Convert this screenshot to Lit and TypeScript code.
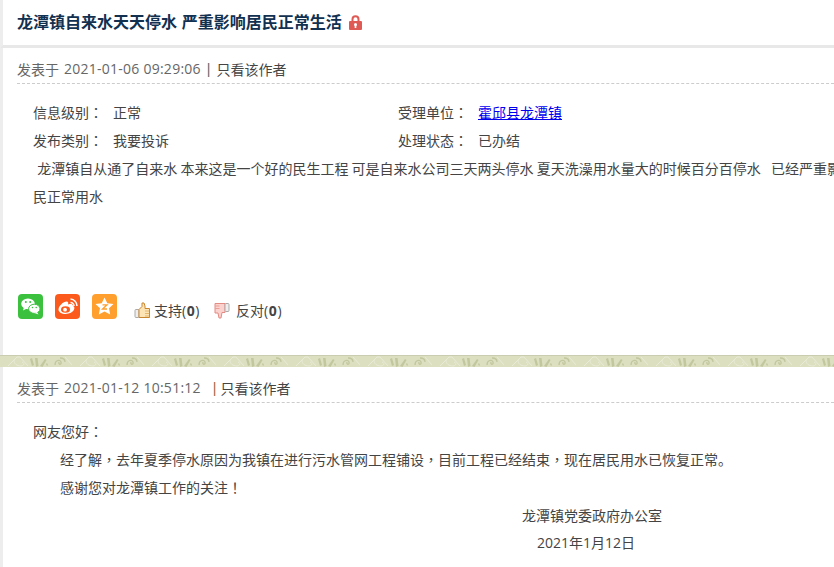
import { LitElement, html, css, svg } from "lit";
import { customElement } from "lit/decorators.js";

const meta = (date: string, sep: string) => html`<div class="meta"><span>发表于</span><span class="date">${date}</span><span class=${sep}>|</span><span class="only">只看该作者</span></div>`;
const p = (s: string) => html`<span class="punct">${s}</span>`;

const bandMotif = svg`
  <path d="M8 10L17 1h3l8 9M14 4c0 4 3 6 7 6 3 0 4-3 1-4" fill="none" stroke="#e9ebd6" stroke-width="1"/>
  <path d="M30 3l2 7 2-1-2-7zM35 2l1 9 2.500-1-1-8zM40 10l5-7 1.500 1-4 7zM46 8l1-1 1 2-1 1z" fill="#c3c79e"/>
  <path d="M55 9c0-5 5-6 6-3s-3 3-2 0M60 2c3 0 5 1 5 4" fill="none" stroke="#c3c79e" stroke-width="1.300"/>
  <path d="M65 1l8 9" fill="none" stroke="#e9ebd6" stroke-width="1"/>`;

@customElement("app-root")
export class AppRoot extends LitElement {
  static styles = css`
    :host { display: block; width: 834px; height: 567px; overflow: hidden; background: #fff; font-family: "Noto Sans CJK SC", "Noto Sans", sans-serif; font-size: 14px; color: #444; }
    .page { width: 888px; height: 567px; display: flex; flex-direction: column; }
    .rail { border-left: 3px solid #ededed; box-sizing: border-box; }
    .head { height: 48px; flex: none; display: flex; align-items: center; padding: 0 0 3px 14px; gap: 7px; border-bottom: 3px solid #e8e8e8; }
    h1 { margin: 0; font-size: 16px; font-weight: 700; color: #12304f; line-height: 22px; word-spacing: 1px; }
    .lock { margin-top: 3px; }
    .post { padding: 0 14px; height: 307px; flex: none; }
    .meta { height: 31px; display: flex; align-items: flex-end; padding-bottom: 4px; border-bottom: 1px dashed #ccc; line-height: 20px; color: #666; }
    .date { font-family: "Open Sans", sans-serif; letter-spacing: 0.25px; margin-left: 5px; }
    .sep1 { margin: 0 6px 0 6px; color: #666; font-family: "Liberation Sans", sans-serif; }
    .sep2 { margin: 0 4px 0 12px; color: #a0633a; font-family: "Liberation Sans", sans-serif; }
    .only { color: #444; }
    .info { display: grid; grid-template-columns: 365px 1fr; padding: 18px 0 0 16px; row-gap: 8px; line-height: 20px; }
    .cell { display: flex; }
    .cell b { font-weight: 400; width: 80px; }
    .punct { font-family: "Noto Sans CJK TC", sans-serif; }
    a { color: #00e; text-decoration: underline; }
    .text { margin: 0 0 0 16px; padding-top: 4px; line-height: 28px; height: 128px; white-space: pre-wrap; text-indent: -2px; }
    .actions { display: flex; align-items: flex-start; margin-top: 12px; padding-left: 1px; }
    .soc { width: 25px; height: 25px; display: block; margin-right: 12px; flex: none; }
    .vote { display: flex; align-items: center; margin: 6px 14px 0 0; gap: 3px; line-height: 20px; color: #444; }
    .vote.first { margin-left: 5px; }
    .vote.down { gap: 5px; }
    .num { font-family: "Open Sans", sans-serif; letter-spacing: 0.6px; }
    .num b { font-weight: 700; }
    .band { display: block; height: 12px; width: 100%; flex: none; }
    .reply { padding: 0 14px; flex: 1; }
    .body { padding: 14px 0 0 16px; line-height: 28px; }
    .ind { padding-left: 27px; }
    .sign { padding-left: 489px; }
    .sign2 { padding-left: 504px; font-family: "Open Sans", "Noto Sans CJK SC", sans-serif; }
  `;
  render() {
    return html`<div class="page">
      <div class="head rail"><h1>龙潭镇自来水天天停水 严重影响居民正常生活</h1>
        <svg class="lock" width="13" height="15" viewBox="0 0 13 15"><path d="M3.500 7V4.200a3 3 0 0 1 6 0V7" fill="none" stroke="#e05a55" stroke-width="2"/><rect y="6" width="13" height="9" rx="1" fill="#e05a55"/><circle cx="6.500" cy="9.500" r="1.500" fill="#fff"/><rect x="5.700" y="10" width="1.600" height="3" fill="#fff"/></svg>
      </div>
      <section class="post rail">
        ${meta("2021-01-06 09:29:06", "sep1")}
        <div class="info">
          <div class="cell"><b>信息级别${p("：")}</b><span>正常</span></div>
          <div class="cell"><b>受理单位${p("：")}</b><a href="#">霍邱县龙潭镇</a></div>
          <div class="cell"><b>发布类别${p("：")}</b><span>我要投诉</span></div>
          <div class="cell"><b>处理状态${p("：")}</b><span>已办结</span></div>
        </div>
        <div class="text">  龙潭镇自从通了自来水 本来这是一个好的民生工程 可是自来水公司三天两头停水 夏天洗澡用水量大的时候百分百停水   \u200A已经严重影响居民正常用水</div>
        <div class="actions">
          <svg class="soc" viewBox="0 0 25 25"><rect width="25" height="25" rx="4" fill="#3cc13f"/><ellipse cx="10" cy="9.800" rx="6.800" ry="5.400" fill="#fff"/><path d="M6 13l-1 3.500 4-2z" fill="#fff"/><ellipse cx="16.300" cy="14.800" rx="5.700" ry="4.600" fill="#fff" stroke="#3cc13f"/><path d="M19 18l1.500 2.500-4-1.500z" fill="#fff"/><circle cx="7.800" cy="8" r="1" fill="#3cc13f"/><circle cx="12.200" cy="8" r="1" fill="#3cc13f"/><circle cx="14.500" cy="13.500" r=".8" fill="#3cc13f"/><circle cx="18.200" cy="13.500" r=".8" fill="#3cc13f"/></svg>
          <svg class="soc" viewBox="0 0 25 25"><rect width="25" height="25" rx="4" fill="#fb5a1c"/><path d="M3.500 15.500c0-3.500 5-8 8-8 2 0 2 1.800 1.500 3 3-1 5-.5 5 1.500 3 1 1.500 7.500-7.500 8-4 0-7-1.800-7-4.500z" fill="#fff"/><ellipse cx="10.500" cy="15.500" rx="4.500" ry="3.200" fill="#fb5a1c"/><circle cx="10" cy="15.700" r="1.900" fill="#fff"/><path d="M15.500 8.500a3.500 3.500 0 0 1 3.500 3.500M15.500 5a7 7 0 0 1 6.500 7" fill="none" stroke="#fff" stroke-width="1.500"/></svg>
          <svg class="soc" viewBox="0 0 25 25"><rect width="25" height="25" rx="4" fill="#ff9f2e"/><path d="M12.500 3.500l2.800 5.800 6.200.8-4.500 4.200 1.200 6.200-5.700-3.100-5.700 3.100 1.200-6.200-4.500-4.200 6.200-.8z" fill="#fff"/><path d="M10.500 10.800h4.500l-4.500 4.200h4.500" fill="none" stroke="#ff9f2e" stroke-width="1.300"/></svg>
          <span class="vote first"><svg width="17" height="17" viewBox="0 0 17 17"><rect x="1" y="7.500" width="4" height="8" rx="1" fill="#eee" stroke="#aaa"/><path d="M5 7.500l3-3V1h2l1 3v2.500h4.500v9H5z" fill="#fde4b4" stroke="#c9852e"/><path d="M11 9h4.500M11 11.500h4.500M11 14h4.500" stroke="#d9a14f" stroke-width=".7"/></svg><span>支持<span class="num">(<b>0</b>)</span></span></span>
          <span class="vote down"><svg width="17" height="17" viewBox="0 0 17 17"><path d="M1 1.500h10v9H8l-1 5.500H5L4 11H1z" fill="#fbd2cd" stroke="#e38a83"/><rect x="11" y="1.500" width="4" height="8" rx="1" fill="#eee" stroke="#aaa"/><path d="M1.500 4h4M1.500 6.500h4" stroke="#e38a83" stroke-width=".7"/></svg><span>反对<span class="num">(<b>0</b>)</span></span></span>
        </div>
      </section>
      <svg class="band" viewBox="0 0 888 12" preserveAspectRatio="none">
        <defs><pattern id="p" width="72" height="11" patternUnits="userSpaceOnUse" y="1">
          <rect width="72" height="11" fill="#dcdfc0"/>${bandMotif}
        </pattern></defs>
        <rect width="888" height="12" fill="#cbcdb0"/><rect y="1" width="888" height="11" fill="url(#p)"/>
      </svg>
      <section class="reply rail">
        ${meta("2021-01-12 10:51:12", "sep2")}
        <div class="body">
          <div>网友您好${p("：")}</div>
          <div class="ind">经了解${p("，")}去年夏季停水原因为我镇在进行污水管网工程铺设${p("，")}目前工程已经结束${p("，")}现在居民用水已恢复正常。</div>
          <div class="ind">感谢您对龙潭镇工作的关注${p("！")}</div>
          <div class="sign">龙潭镇党委政府办公室</div>
          <div class="sign sign2">2021年1月12日</div>
        </div>
      </section>
    </div>`;
  }
}
